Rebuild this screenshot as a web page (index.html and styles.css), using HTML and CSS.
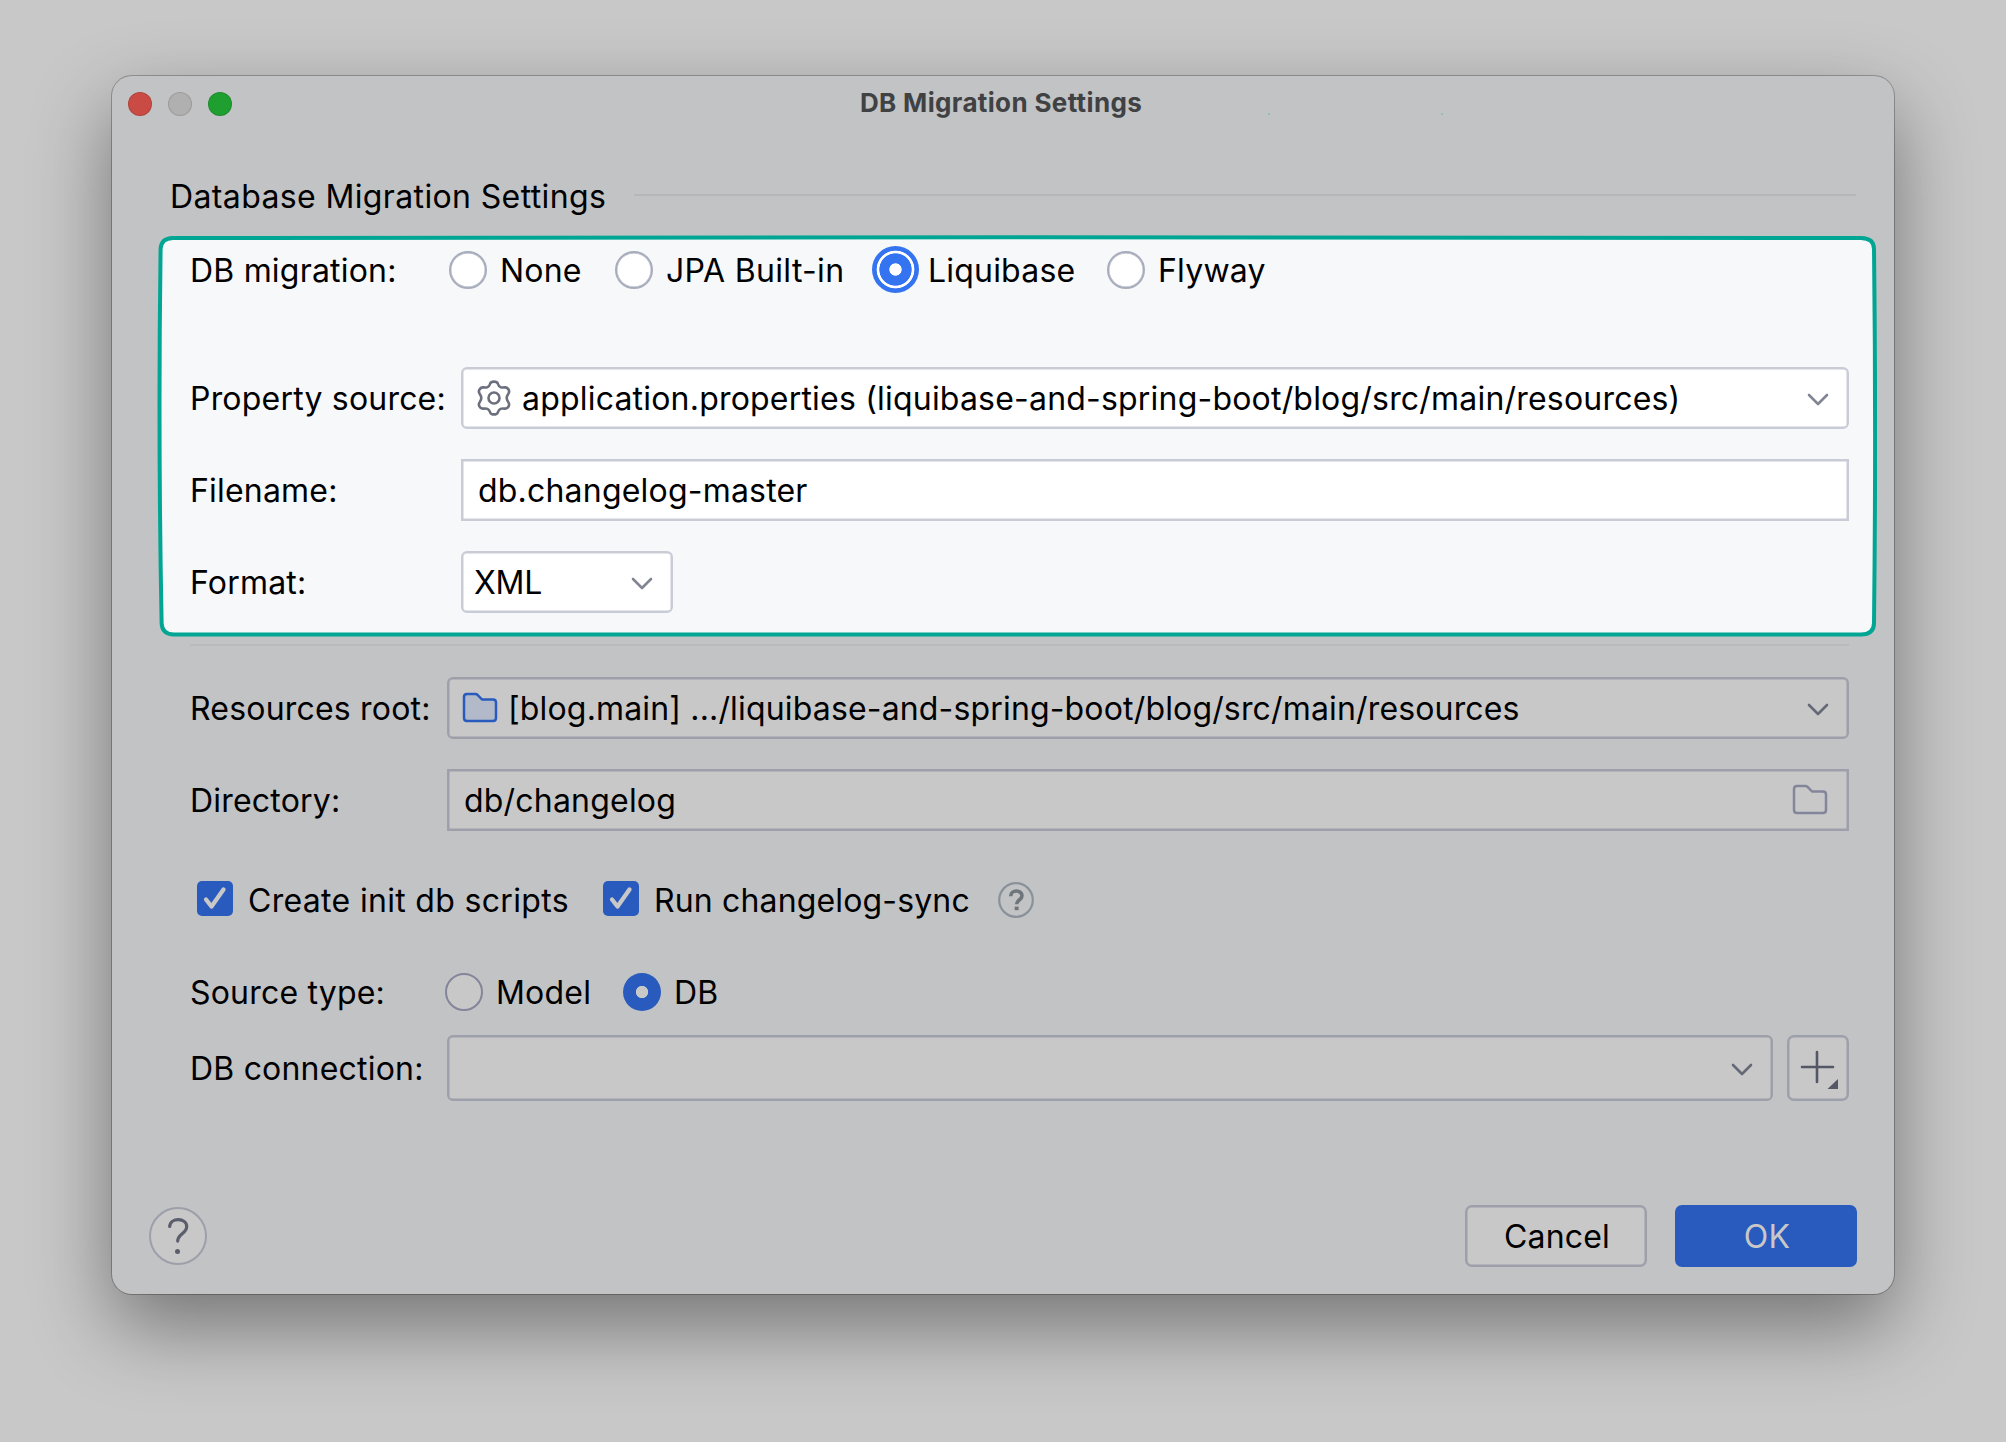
FILE: index.html
```html
<!DOCTYPE html>
<html lang="en">
<head>
<meta charset="utf-8">
<title>DB Migration Settings</title>
<link rel="stylesheet" href="styles.css">
</head>
<body>
<main class="window">
  <header class="titlebar">
    <div class="lights"><i class="light red"></i><i class="light idle"></i><i class="light green"></i></div>
    <h1 class="title">DB Migration Settings</h1>
    <i class="speck speck-a"></i><i class="speck speck-b"></i>
  </header>

  <div class="heading"><h2 class="heading-text">Database Migration Settings</h2><span class="heading-line"></span></div>

  <section class="highlight">
    <svg class="outline" viewBox="0 0 1720 402" width="1720" height="402">
      <path d="M16 3Q860 1.4 1704 3Q1717 3.200 1717 14Q1719.200 200 1717 388Q1717 399.400 1704 399.600Q860 400.800 17 399.600Q5 399.400 4.600 388Q1 200 3.600 14Q4 3.200 16 3Z" fill="#f7f8fa" stroke="#00a693" stroke-width="4"/>
    </svg>
    <div class="row row-migration">
      <span class="label">DB migration:</span>
      <span class="option opt-none"><i class="radio"></i>None</span>
      <span class="option opt-jpa"><i class="radio"></i>JPA Built-in</span>
      <span class="option opt-liquibase"><i class="radio focused"></i>Liquibase</span>
      <span class="option"><i class="radio"></i>Flyway</span>
    </div>
    <div class="row row-property">
      <span class="label">Property source:</span>
      <div class="field combo">
        <svg class="gear" viewBox="-18 -18 36 36" width="36" height="36"><path d="M0-16.400Q3-16.400 3.800-14.400Q4.900-11.400 6.400-10.900Q8-10.200 10.600-10.600Q13.300-11 14.600-8.400Q15.800-6 14.200-4Q12.700-1.800 12.700 0Q12.700 1.800 14.200 4Q15.800 6 14.600 8.400Q13.300 11 10.600 10.600Q8 10.200 6.400 10.900Q4.900 11.400 3.800 14.400Q3 16.400 0 16.400Q-3 16.400-3.800 14.400Q-4.900 11.400-6.400 10.900Q-8 10.200-10.600 10.600Q-13.300 11-14.600 8.400Q-15.800 6-14.200 4Q-12.700 1.800-12.700 0Q-12.700-1.800-14.200-4Q-15.800-6-14.600-8.400Q-13.300-11-10.600-10.600Q-8-10.200-6.400-10.900Q-4.900-11.400-3.800-14.400Q-3-16.400 0-16.400Z"/><circle r="5.500"/></svg>
        <span class="value">application.properties (liquibase-and-spring-boot/blog/src/main/resources)</span>
        <svg class="chevron" viewBox="0 0 22 14" width="22" height="14"><path d="M2 2l9 9 9-9"/></svg>
      </div>
    </div>
    <div class="row">
      <span class="label">Filename:</span>
      <div class="field input"><span class="value">db.changelog-master</span></div>
    </div>
    <div class="row">
      <span class="label">Format:</span>
      <div class="field combo short"><span class="value tight">XML</span>
        <svg class="chevron" viewBox="0 0 22 14" width="22" height="14"><path d="M2 2l9 9 9-9"/></svg>
      </div>
    </div>
  </section>

  <section class="dimmed">
    <div class="row">
      <span class="label">Resources root:</span>
      <div class="field combo">
        <svg class="folder blue" viewBox="0 0 36 32" width="36" height="32"><path d="M5 2h8.500q1.200 0 2 .8l4.500 4.700h11q3 0 3 3v15.500q0 3-3 3H5q-3 0-3-3V5q0-3 3-3Z"/></svg>
        <span class="value root">[blog.main] .../liquibase-and-spring-boot/blog/src/main/resources</span>
        <svg class="chevron" viewBox="0 0 22 14" width="22" height="14"><path d="M2 2l9 9 9-9"/></svg>
      </div>
    </div>
    <div class="row">
      <span class="label">Directory:</span>
      <div class="field input"><span class="value">db/changelog</span>
        <svg class="folder" viewBox="0 0 36 32" width="36" height="32"><path d="M5 2h8.500q1.200 0 2 .8l4.500 4.700h11q3 0 3 3v15.500q0 3-3 3H5q-3 0-3-3V5q0-3 3-3Z"/></svg>
      </div>
    </div>
    <div class="row row-checks">
      <span class="check check-init"><svg class="box" viewBox="0 0 36 35" width="36" height="35"><rect width="36" height="35" rx="5"/><path d="M9 18.500l5.500 7L26.500 8.500"/></svg>Create init db scripts</span>
      <span class="check check-sync"><svg class="box" viewBox="0 0 36 35" width="36" height="35"><rect width="36" height="35" rx="5"/><path d="M9 18.500l5.500 7L26.500 8.500"/></svg>Run changelog-sync</span>
      <svg class="hint" viewBox="0 0 36 36" width="36" height="36"><circle cx="18" cy="18" r="16.800"/><path d="M12.700 14.200c0-6.800 11.300-6.800 11.300-.4 0 4.200-5.400 4.200-5.400 8.400"/><rect x="16.700" y="24.600" width="3.900" height="3.600"/></svg>
    </div>
    <div class="row row-source">
      <span class="label">Source type:</span>
      <span class="option opt-model"><i class="radio"></i>Model</span>
      <span class="option"><i class="radio selected"></i>DB</span>
    </div>
    <div class="row row-connection">
      <span class="label">DB connection:</span>
      <div class="field combo">
        <svg class="chevron" viewBox="0 0 22 14" width="22" height="14"><path d="M2 2l9 9 9-9"/></svg>
      </div>
      <span class="add"><svg viewBox="0 0 62 66" width="62" height="66"><path class="plus" d="M30 17v30M15 32h31"/><path class="corner" d="M51 44v10h-10.500z"/></svg></span>
    </div>
  </section>

  <footer class="footer">
    <svg class="help" viewBox="0 0 58 58" width="58" height="58"><circle class="ring" cx="29" cy="29" r="28"/><path d="M20.700 19.500c.6-9.500 17-9 17 .1 0 7-9 7.500-9 14.500"/><circle class="dot" cx="28.500" cy="44.600" r="2.500"/></svg>
    <span class="button">Cancel</span>
    <span class="button primary">OK</span>
  </footer>
</main>
</body>
</html>
```
FILE: styles.css
```css
* { box-sizing: border-box; }

body {
  margin: 0;
  height: 1442px;
  padding: 76px 112px 0;
  overflow: hidden;
  background: #c8c8c8;
  color: #000;
  font: 400 32px/40px Inter, "Liberation Sans", sans-serif;
  letter-spacing: .2px;
  white-space: nowrap;
}

svg { display: block; flex: none; fill: none; stroke-linecap: round; stroke-linejoin: round; }

.window {
  display: flex;
  flex-direction: column;
  width: 1782px;
  height: 1218px;
  border-radius: 20px;
  background: #c2c3c5;
  box-shadow: 0 0 0 1px rgba(0, 0, 0, .25), 0 32px 80px rgba(0, 0, 0, .42);
}

.titlebar {
  display: grid;
  position: relative;
  grid-template-columns: 1fr auto 1fr;
  align-items: center;
  height: 56px;
  padding: 0 20px 0 16px;
}
.lights { display: flex; gap: 16px; }
.light { width: 24px; height: 24px; border-radius: 50%; border: 1px solid rgba(0, 0, 0, .12); }
.red { background: #c94b43; }
.idle { background: #b0b0b0; }
.green { background: #209f31; }
.title { margin: 0 0 2px; font-size: 26px; font-weight: 700; letter-spacing: .35px; color: #404142; }
.speck { position: absolute; top: 37px; width: 2px; height: 2px; border-radius: 1px; background: #79bfb8; }
.speck-a { left: 1156px; }
.speck-b { left: 1329px; }

.heading { display: flex; align-items: center; height: 40px; margin: 44px 38px 0 58px; }
.heading-text { width: 464px; margin: 0; padding-top: 2px; font-size: 32px; font-weight: 400; letter-spacing: .37px; }
.heading-line { flex: 1; height: 2px; margin-bottom: 2px; background: #b6b7b9; }

.row { display: flex; align-items: center; height: 62px; }
.label { flex: none; padding-top: 2px; }
.value { padding-top: 2px; }
.tight { letter-spacing: -.3px; }
.root { letter-spacing: .16px; }

.field {
  display: flex;
  flex: 1;
  align-items: center;
  height: 62px;
  border: 2px solid #c9ccd6;
  background: #fff;
  box-shadow: inset 0 0 0 .5px #c9ccd6;
}
.combo { border-radius: 6px; }
.chevron { margin: 4px 18px 0 auto; stroke: #818594; stroke-width: 2.6; }

/* Highlighted group */
.highlight { position: relative; height: 402px; margin: 19px 17px 0 45px; padding: 12px 28px 0 33px; }
.outline { position: absolute; left: 0; top: 0; }
.highlight .row { position: relative; margin-top: 30px; }
.highlight .label { width: 271px; }
.highlight .row-migration { height: 46px; margin-top: 0; }
.highlight .row-migration .label { width: 259px; }
.highlight .row-property { margin-top: 74px; }
.highlight .input { padding-left: 15px; }
.gear { margin: 0 10px 0 13px; stroke: #6c707e; stroke-width: 2.6; }
.highlight .short { flex: none; width: 212px; padding-left: 11px; }

.option { display: flex; align-items: center; gap: 13px; padding-top: 2px; }
.opt-none { width: 166px; }
.opt-jpa { width: 257px; letter-spacing: .33px; }
.opt-liquibase { width: 235px; gap: 9px; }
.radio {
  width: 38px;
  height: 38px;
  margin-top: -2px;
  border-radius: 50%;
  border: 2px solid #a8adbd;
  background: #fff;
  box-shadow: inset 0 0 0 .4px #a8adbd;
}
.radio.focused {
  width: 47px;
  height: 47px;
  margin-top: -3px;
  border: 0;
  background: radial-gradient(circle, #fff 5.8px, #3574f0 6.500px 15.800px, #fff 16.500px 18.500px, #3574f0 19.200px);
  box-shadow: none;
}

/* Dimmed group */
.dimmed { margin: 7px 45px 0 78px; padding-top: 31px; border-top: 2px solid #b9babc; }
.dimmed .row + .row { margin-top: 30px; }
.dimmed .label { width: 257px; }
.dimmed .field, .add { border-color: #9d9faa; background: #c8c8c8; }
.dimmed .field { box-shadow: inset 0 0 0 .5px #9d9faa; }
.dimmed .chevron { stroke: #656877; }
.folder { margin: 0 19px 0 auto; stroke: #83869a; stroke-width: 2.500; }
.folder.blue { margin: 0 10px 0 13px; stroke: #285bbd; fill: #b2b9c8; }
.dimmed .input { padding-left: 15px; }

.dimmed .row-checks { height: 38px; margin-top: 50px !important; padding-left: 7px; }
.check { display: flex; align-items: center; gap: 15px; padding-top: 2px; }
.check-init { width: 406px; letter-spacing: .32px; }
.check-sync { letter-spacing: .15px; }
.box { margin-top: -5px; }
.box rect { fill: #285bbd; }
.box path { stroke: #c8c8c8; stroke-width: 4.3; }
.hint { margin-left: 28px; stroke: #8a9299; stroke-width: 2.200; }
.hint path { stroke: #6e757b; stroke-width: 3.600; stroke-linecap: butt; }
.hint rect { fill: #6e757b; stroke: none; }

.dimmed .row-source { height: 38px; margin-top: 54px !important; }
.row-source .label { width: 255px; }
.dimmed .radio { border-color: #83869a; background: #c8c8c8; box-shadow: none; }
.dimmed .radio.selected { border: 0; background: radial-gradient(circle, #c8c8c8 5.800px, #285bbd 6.500px); }
.opt-model { width: 178px; }

.dimmed .row-connection { height: 66px; margin-top: 24px !important; }
.row-connection .field { height: 66px; }
.add {
  width: 62px;
  height: 66px;
  margin-left: 14px;
  border: 2px solid #9d9faa;
  border-radius: 7px;
  box-shadow: inset 0 0 0 .5px #9d9faa;
}
.add svg { margin: -2px; }
.plus { stroke: #545766; stroke-width: 2.600; }
.corner { fill: #545766; }

.footer { display: flex; align-items: center; height: 62px; margin: 104px 37px 0; gap: 28px; }
.help { margin-right: auto; stroke: #5a5d6b; stroke-width: 3.200; }
.help .ring { fill: #c8c8c8; stroke: #9d9faa; stroke-width: 2; }
.help .dot { fill: #5a5d6b; stroke: none; }
.button {
  width: 182px;
  height: 62px;
  padding-left: 2px;
  border: 2px solid #9d9faa;
  border-radius: 7px;
  background: #c8c8c8;
  box-shadow: inset 0 0 0 .5px #9d9faa;
  line-height: 60px;
  text-align: center;
}
.primary { border-color: #285bbd; background: #285bbd; box-shadow: none; color: #c8c8c8; }
```
